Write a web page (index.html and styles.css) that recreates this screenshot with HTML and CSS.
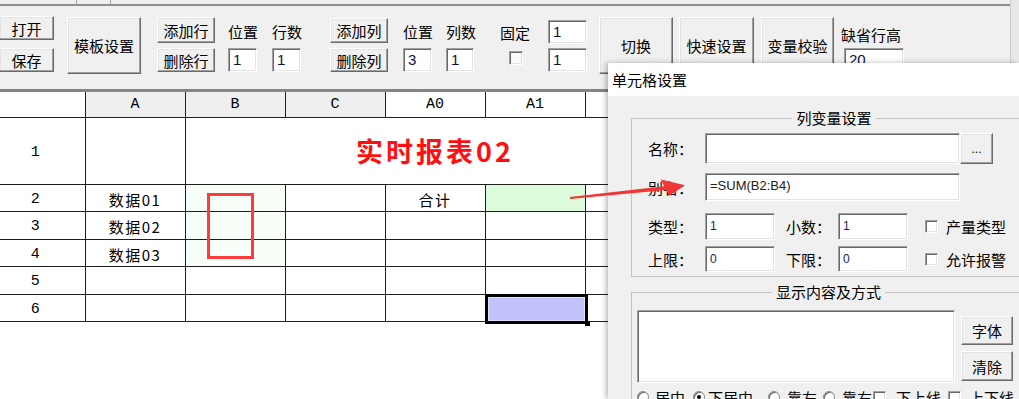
FILE: index.html
```html
<!DOCTYPE html>
<html lang="zh-CN">
<head>
<meta charset="utf-8">
<title>报表模板设计</title>
<link rel="stylesheet" href="styles.css">
</head>
<body>
<div class="head">
  <div class="head-main">
    <div class="topstrip"><span class="tab tab1"></span><span class="tab tab2"></span></div>
    <div class="toolbar">
      <div class="stack g-file">
        <div class="btn b-open">打开</div>
        <div class="btn b-save">保存</div>
      </div>
      <div class="btn big b-tpl">模板设置</div>
      <div class="stack g-row">
        <div class="btn b-add">添加行</div>
        <div class="btn b-del">删除行</div>
      </div>
      <div class="field f-pos1"><span class="lbl">位置</span><span class="inp">1</span></div>
      <div class="field f-cnt1"><span class="lbl">行数</span><span class="inp">1</span></div>
      <div class="stack g-col">
        <div class="btn b-addc">添加列</div>
        <div class="btn b-delc">删除列</div>
      </div>
      <div class="field f-pos2"><span class="lbl">位置</span><span class="inp">3</span></div>
      <div class="field f-cnt2"><span class="lbl">列数</span><span class="inp">1</span></div>
      <div class="field f-fix"><span class="lbl lbl-fix">固定</span><span class="chk tb-chk"></span></div>
      <div class="stack g-fixinp">
        <span class="inp fi1">1</span>
        <span class="inp fi2">1</span>
      </div>
      <div class="btn big b-sw">切换</div>
      <div class="btn big b-quick">快速设置</div>
      <div class="btn big b-check">变量校验</div>
      <div class="field f-h"><span class="lbl lbl-h">缺省行高</span><span class="inp inp-h">20</span></div>
    </div>
  </div>
  <div class="head-side"></div>
</div>

<table class="grid">
  <colgroup><col class="c-head"><col class="c-data"><col class="c-data"><col class="c-data"><col class="c-data"><col class="c-data"><col class="c-data"></colgroup>
  <tr class="r-h"><th class="corner"></th><th class="gray">A</th><th class="gray">B</th><th class="gray">C</th><th>A0</th><th>A1</th><th></th></tr>
  <tr class="r1"><td class="rn">1</td><td></td><td colspan="5" class="title">实时报表02</td></tr>
  <tr class="r2"><td class="rn">2</td><td class="txt">数据01</td><td class="tint"></td><td></td><td class="txt">合计</td><td class="green"></td><td></td></tr>
  <tr class="r3"><td class="rn">3</td><td class="txt">数据02</td><td class="tint"></td><td></td><td></td><td></td><td></td></tr>
  <tr class="r4"><td class="rn">4</td><td class="txt">数据03</td><td class="tint"></td><td></td><td></td><td></td><td></td></tr>
  <tr class="r5"><td class="rn">5</td><td></td><td></td><td></td><td></td><td></td><td></td></tr>
  <tr class="r6"><td class="rn">6</td><td></td><td></td><td></td><td></td><td class="sel"></td><td></td></tr>
</table>

<div class="mark"></div>

<div class="dialog">
  <div class="dlg-title">单元格设置</div>
  <div class="dlg-body">
    <fieldset class="grp grp1">
      <legend>列变量设置</legend>
      <div class="row r-name">
        <span class="dl">名称：</span>
        <span class="inp dinp w-long"></span>
        <span class="btn b-more">...</span>
      </div>
      <div class="row r-alias">
        <span class="dl">别名：</span>
        <span class="inp dinp w-long alias">=SUM(B2:B4)</span>
      </div>
      <div class="row r-type">
        <span class="dl">类型：</span>
        <span class="inp dinp w-s">1</span>
        <span class="dl dl2">小数：</span>
        <span class="inp dinp w-s">1</span>
        <span class="chk dchk"></span>
        <span class="ctext">产量类型</span>
      </div>
      <div class="row r-lim">
        <span class="dl">上限：</span>
        <span class="inp dinp w-s">0</span>
        <span class="dl dl2">下限：</span>
        <span class="inp dinp w-s">0</span>
        <span class="chk dchk"></span>
        <span class="ctext">允许报警</span>
      </div>
    </fieldset>
    <fieldset class="grp grp2">
      <legend>显示内容及方式</legend>
      <div class="content-row">
        <span class="inp area"></span>
        <div class="side-btns">
          <span class="btn b-font">字体</span>
          <span class="btn b-clear">清除</span>
        </div>
      </div>
      <div class="opts">
        <span class="radio o1"></span><span class="otext tx1">居中</span>
        <span class="radio on o2"></span><span class="otext tx2">下居中</span>
        <span class="radio o3"></span><span class="otext tx3">靠左</span>
        <span class="radio o4"></span><span class="otext tx4">靠右</span>
        <span class="chk o5"></span><span class="otext tx5">下上线</span>
        <span class="chk o6"></span><span class="otext tx6">上下线</span>
      </div>
    </fieldset>
  </div>
</div>

<svg class="arrow" width="1019" height="399" viewBox="0 0 1019 399" aria-hidden="true">
  <polygon points="570,197 664,186.2 661,179.5 685,185.3 669,196 666.5,190 570,199" fill="#f23535"/>
</svg>
</body>
</html>
```

FILE: styles.css
```css
html, body { margin: 0; padding: 0; }
body {
  width: 1019px;
  height: 399px;
  overflow: hidden;
  position: relative;
  background: #fff;
  font-family: "Noto Sans CJK SC", "Microsoft YaHei", sans-serif;
  font-size: 15px;
  color: #000;
}

/* ---------- top area ---------- */
.head { display: flex; height: 92px; }
.head-main { width: 1010px; background: #f0f0f0; }
.head-side { flex: 1; background: #e8e8e8; border-left: 1px solid #cdcdcd; }

.topstrip {
  height: 4px;
  border-bottom: 2px solid #8e8e8e;
  display: flex;
  padding-left: 76px;
}
.tab { height: 4px; border-left: 1px solid #a5a5a5; }
.tab1 { width: 33px; }
.tab2 { width: 10px; }

.toolbar {
  display: flex;
  align-items: flex-start;
  box-sizing: border-box;
  height: 86px;
  padding-top: 10px;
  border-bottom: 3px solid #858585;
}

.btn {
  box-sizing: border-box;
  display: flex;
  align-items: center;
  justify-content: center;
  background: #f0f0f0;
  border: 1px solid;
  border-color: #ffffff #6a6a6a #6a6a6a #ffffff;
  box-shadow: inset -1px -1px 0 #a0a0a0, inset 1px 1px 0 #e3e3e3;
  font-size: 15px;
  line-height: 1;
  white-space: nowrap;
}
.inp {
  box-sizing: border-box;
  display: block;
  background: #fff;
  border: 1px solid;
  border-color: #a0a0a0 #ffffff #ffffff #a0a0a0;
  box-shadow: inset 1px 1px 0 #696969, inset -1px -1px 0 #e3e3e3;
  font-family: "Liberation Sans", Arial, sans-serif;
  font-size: 15px;
  padding-left: 4px;
  line-height: 22px;
  height: 24px;
  color: #10104a;
  white-space: nowrap;
  overflow: hidden;
}
.chk {
  box-sizing: border-box;
  display: block;
  width: 14px;
  height: 14px;
  background: #fafafa;
  border: 1px solid;
  border-color: #a0a0a0 #ffffff #ffffff #a0a0a0;
  box-shadow: inset 1px 1px 0 #696969, inset -1px -1px 0 #e3e3e3;
}

.stack { display: flex; flex-direction: column; }
.field { display: flex; flex-direction: column; }
.lbl { display: block; height: 32px; line-height: 32px; white-space: nowrap; }

.g-file { margin-left: -1px; width: 55px; }
.b-open { height: 24px; }
.b-save { height: 24px; margin-top: 8px; }

.big { height: 57px; margin-top: 1px; }
.b-tpl { margin-left: 13px; width: 74px; }

.g-row { margin-left: 16px; width: 58px; }
.b-add { margin-top: 1px; height: 26px; }
.b-del { margin-top: 5px; height: 24px; }

.f-pos1 { margin-left: 13px; width: 29px; }
.f-cnt1 { margin-left: 15px; width: 29px; }

.g-col { margin-left: 29px; width: 58px; }
.b-addc { margin-top: 2px; height: 25px; }
.b-delc { margin-top: 5px; height: 24px; }

.f-pos2 { margin-left: 15px; width: 29px; }
.f-cnt2 { margin-left: 14px; width: 28px; }

.f-fix { margin-left: 26px; width: 31px; }
.lbl-fix { height: 35px; line-height: 34px; }
.tb-chk { margin-left: 9px; }

.g-fixinp { margin-left: 17px; width: 39px; }
.fi1 { margin-top: 4px; }
.fi2 { margin-top: 4px; }

.b-sw { margin-left: 12px; width: 74px; }
.b-quick { margin-left: 6px; width: 75px; }
.b-check { margin-left: 7px; width: 73px; }

.f-h { margin-left: 7px; }
.lbl-h { line-height: 38px; }
.inp-h { margin-left: 3px; width: 60px; }

/* ---------- sheet ---------- */
.grid {
  border-collapse: collapse;
  table-layout: fixed;
  width: 685px;
  font-family: "Noto Sans CJK SC", sans-serif;
}
.c-head { width: 85px; }
.c-data { width: 100px; }
.grid th, .grid td {
  border: 1px solid #1e1e1e;
  padding: 0;
  text-align: center;
  vertical-align: middle;
  line-height: 18px;
}
.grid td { padding-top: 3px; }
.grid tr > :first-child { border-left: none; }
.r-h th {
  border-top: none;
  font-family: "Liberation Mono", monospace;
  font-weight: normal;
  font-size: 15px;
  height: 25px;
  background: #fff;
}
.r-h th.gray { background: #efefef; }
.r1 td { height: 63px; }
.r2 td { height: 23px; }
.r3 td { height: 24px; }
.r4 td { height: 23px; }
.r5 td { height: 24px; }
.r6 td { height: 23px; }
.grid td.rn {
  font-family: "Liberation Mono", monospace;
  font-size: 15px;
  padding-right: 14px;
}
.txt { font-size: 15px; letter-spacing: 1.5px; }
.grid td.title {
  color: #ff1010;
  font-weight: bold;
  font-size: 27px;
  line-height: 30px;
  letter-spacing: 3px;
  padding-top: 0;
  padding-bottom: 0;
}
.r1 td.title { height: 66px; }
.tint { background: #f8fff8; }
.green { background: #dbfbdb; }
.sel { position: relative; }
.sel::after {
  content: "";
  position: absolute;
  left: -1px;
  top: -1px;
  right: -3px;
  bottom: -3px;
  border: 3px solid #000;
  background: #c2c2ff;
  box-shadow: inset 0 0 0 1px #e2e2ff;
}
.sel::before {
  content: "";
  position: absolute;
  right: -5px;
  bottom: -5px;
  width: 5px;
  height: 5px;
  background: #000;
  z-index: 1;
}

/* red annotation rectangle (overlay) */
.mark {
  position: absolute;
  left: 207px;
  top: 193px;
  width: 47px;
  height: 66px;
  box-sizing: border-box;
  border: 3px solid #ff3b3b;
}

/* ---------- dialog ---------- */
.dialog {
  position: absolute;
  left: 608px;
  top: 63px;
  width: 411px;
  height: 336px;
  overflow: hidden;
  background: #f0f0f0;
  box-shadow: -2px 0 5px rgba(0, 0, 0, 0.28);
}
.dlg-title {
  height: 33px;
  line-height: 33px;
  background: #fff;
  padding-left: 4px;
  font-size: 15px;
}
.dlg-body { padding: 12px 0 0 23px; }

.grp {
  margin: 0;
  padding: 0 0 4px 16px;
  width: 390px;
  box-sizing: border-box;
  border: 1px solid #c2c2c2;
  min-width: 0;
}
.grp legend {
  margin: 0 auto;
  padding: 0 4px;
  line-height: 20px;
  height: 20px;
  font-size: 15px;
}
.row { display: flex; align-items: center; }
.r-name { margin-top: 5px; height: 31px; }
.r-alias { margin-top: 9px; height: 28px; }
.r-type { margin-top: 12px; height: 27px; }
.r-lim { margin-top: 6px; height: 26px; }

.dl { width: 57px; flex: none; white-space: nowrap; font-size: 15px; }
.dl2 { width: 63px; box-sizing: border-box; padding-left: 11px; }
.dinp {
  font-size: 12px;
  line-height: 20px;
  padding-top: 2px;
  color: #1a1a5a;
  height: 100%;
  flex: none;
}
.w-long { width: 255px; }
.alias { font-size: 13px; color: #222; line-height: 24px; padding-top: 0; }
.w-s { width: 70px; }
.b-more {
  width: 33px;
  height: 31px;
  flex: none;
  font-family: "Liberation Sans", sans-serif;
  font-size: 12px;
}
.dchk { width: 13px; height: 13px; margin-left: 17px; background: #fff; flex: none; }
.ctext { margin-left: 8px; white-space: nowrap; flex: none; }

.grp2 { margin-top: 5px; padding: 0 0 20px 5px; }
.content-row { display: flex; margin-top: 8px; }
.area { width: 318px; height: 73px; flex: none; }
.side-btns { display: flex; flex-direction: column; margin-left: 6px; }
.b-font { width: 52px; height: 29px; margin-top: 6px; }
.b-clear { width: 52px; height: 30px; margin-top: 6px; }

.opts { display: flex; align-items: flex-start; margin-top: 7px; height: 20px; }
.radio {
  box-sizing: border-box;
  width: 12px;
  height: 12px;
  margin-top: 1px;
  border-radius: 50%;
  background: #fff;
  border: 1px solid #8a8a8a;
  box-shadow: inset 1px 1px 0 #696969;
  flex: none;
  position: relative;
}
.radio.on::after {
  content: "";
  position: absolute;
  left: 3px;
  top: 3px;
  width: 4px;
  height: 4px;
  border-radius: 50%;
  background: #000;
}
.opts .chk { width: 13px; height: 13px; margin-top: 1px; flex: none; background: #fff; }
.otext { white-space: nowrap; line-height: 16px; flex: none; }
.o1 { margin-left: 0; }
.tx1 { margin-left: 6px; }
.o2 { margin-left: 8px; }
.tx2 { margin-left: 3px; }
.o3 { margin-left: 15px; }
.tx3 { margin-left: 7px; }
.o4 { margin-left: 6px; }
.tx4 { margin-left: 7px; }
.o5 { margin-left: 1px; }
.tx5 { margin-left: 10px; }
.o6 { margin-left: 7px; }
.tx6 { margin-left: 8px; }

/* annotation arrow overlay */
.arrow {
  position: absolute;
  left: 0;
  top: 0;
  pointer-events: none;
}
```
